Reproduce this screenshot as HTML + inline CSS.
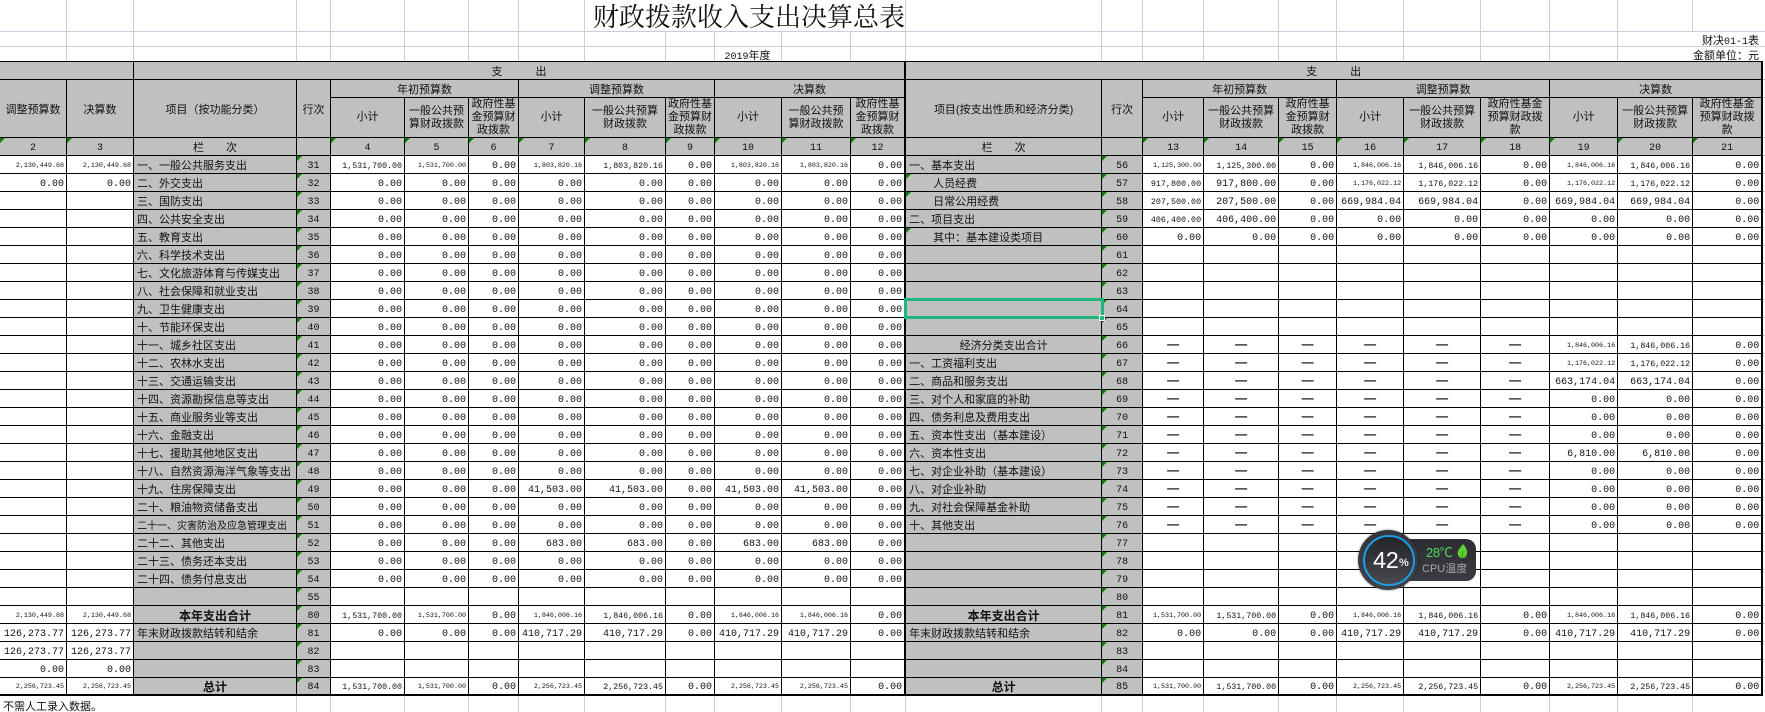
<!DOCTYPE html>
<html lang="zh"><head><meta charset="utf-8"><title>财政拨款收入支出决算总表</title>
<style>
html,body{margin:0;padding:0;background:#fff;width:1765px;height:712px;overflow:hidden}
body{position:relative;font-family:"Liberation Sans","Noto Sans CJK SC",sans-serif;color:#111}
svg.g{position:absolute;left:0;top:0}
table{position:absolute;left:0;top:61px;width:1762px;table-layout:fixed;border-collapse:separate;border-spacing:0;border-top:1px solid #000}
tr{height:18px}
tr.t3{height:40px}
td{box-sizing:border-box;height:18px;padding:3px 2px 0 0;border-right:1px solid #000;border-bottom:1px solid #000;white-space:nowrap;overflow:hidden;text-align:right;vertical-align:middle;font:10px/13px "Liberation Mono","Noto Sans CJK SC",monospace;background:#fff}
td.s{font-size:6.7px}
td.n{font-size:8.4px}
td.w{font-size:8.3px}
td.d{text-align:center;padding:0 0 2px;font:bold 12px/12px "Liberation Sans",sans-serif}
td.x,td.l,td.c,td.b,td.h,td.y{background-color:#c0c0c0}
td.x{text-align:center;padding:3px 0 0;font:11px/13px "Liberation Sans","Noto Sans CJK SC",sans-serif;white-space:nowrap}
tr.t3 td.x{padding:0}
td.l{text-align:left;padding:3px 0 0 3px;font:11px/13px "Liberation Sans","Noto Sans CJK SC",sans-serif}
td.i{padding-left:27px}
td.c{text-align:center;padding:3px 0 0;font:11px/13px "Liberation Sans","Noto Sans CJK SC",sans-serif}
td.b{text-align:center;padding:3px 0 0;font:bold 12px/13px "Liberation Sans","Noto Sans CJK SC",sans-serif}
td.h,td.y{text-align:center;padding:3px 0 0}
td.h,td.t{background-image:linear-gradient(135deg,#0a8000 3.5px,transparent 3.6px);background-size:6px 6px;background-repeat:no-repeat;background-position:0 0}
td.m{border-right-width:2px}
td.e{border-right-width:2px}
tbody tr:last-child td{border-bottom-width:2px}
.a{position:absolute;white-space:nowrap;font-size:11px;line-height:14px}
.mono{font-family:"Liberation Mono","Noto Sans CJK SC",monospace;font-size:10px}
</style></head><body>
<svg class="g" width="1765" height="712" shape-rendering="crispEdges" stroke="#c6cfe0" stroke-width="1">
<path d="M0 31.5H1765M0 46.5H1765"/>
<path d="M66.5 0V61M133.5 0V61M296.5 0V61M330.5 0V61M404.5 0V61M468.5 0V61M518.5 0V61M584.5 0V61M905.5 0V61M1101.5 0V61M1142.5 0V61M1203.5 0V61M1278.5 0V61M1336.5 0V61M1403.5 0V61M1480.5 0V61M1549.5 0V61M1617.5 0V61M1692.5 0V31"/>
<path d="M665.5 31V61M714.5 31V61M781.5 31V61M850.5 31V61"/>
<path d="M296.5 696V712M330.5 696V712M404.5 696V712M468.5 696V712M518.5 696V712M584.5 696V712M665.5 696V712M714.5 696V712M781.5 696V712M850.5 696V712M905.5 696V712M1101.5 696V712M1142.5 696V712M1203.5 696V712M1278.5 696V712M1336.5 696V712M1403.5 696V712M1480.5 696V712M1549.5 696V712M1617.5 696V712M1692.5 696V712"/>
<path d="M1762 79.5H1765M1762 97.5H1765M1762 137.5H1765M1762 155.5H1765M1762 173.5H1765M1762 191.5H1765M1762 209.5H1765M1762 227.5H1765M1762 245.5H1765M1762 263.5H1765M1762 281.5H1765M1762 299.5H1765M1762 317.5H1765M1762 335.5H1765M1762 353.5H1765M1762 371.5H1765M1762 389.5H1765M1762 407.5H1765M1762 425.5H1765M1762 443.5H1765M1762 461.5H1765M1762 479.5H1765M1762 497.5H1765M1762 515.5H1765M1762 533.5H1765M1762 551.5H1765M1762 569.5H1765M1762 587.5H1765M1762 605.5H1765M1762 623.5H1765M1762 641.5H1765M1762 659.5H1765M1762 677.5H1765"/>
</svg>
<div class="a" style="left:593px;top:1px;font:26px/30px 'Noto Serif CJK SC','Liberation Serif',serif;color:#111">财政拨款收入支出决算总表</div>
<div class="a" style="left:714px;width:67px;top:49px;text-align:center"><span class="mono">2019</span>年度</div>
<div class="a" style="right:6px;top:34px">财决<span class="mono">01-1</span>表</div>
<div class="a" style="right:6px;top:49px">金额单位：元</div>
<div class="a" style="left:3px;top:700px">不需人工录入数据。</div>
<table>
<colgroup>
<col style="width:67px"><col style="width:67px"><col style="width:163px"><col style="width:34px"><col style="width:74px"><col style="width:64px"><col style="width:50px"><col style="width:66px"><col style="width:81px"><col style="width:49px"><col style="width:67px"><col style="width:69px"><col style="width:55px">
<col style="width:196px"><col style="width:41px"><col style="width:61px"><col style="width:75px"><col style="width:58px"><col style="width:67px"><col style="width:77px"><col style="width:69px"><col style="width:68px"><col style="width:75px"><col style="width:70px">
</colgroup>
<thead>
<tr><td class="x" colspan="2"></td><td class="x m" colspan="11">支　　　出</td><td class="x e" colspan="11">支　　　出</td></tr>
<tr><td class="x" rowspan="2">调整预算数</td><td class="x" rowspan="2">决算数</td><td class="x" rowspan="2">项目（按功能分类）</td><td class="x" rowspan="2">行次</td><td class="x" colspan="3">年初预算数</td><td class="x" colspan="3">调整预算数</td><td class="x m" colspan="3">决算数</td><td class="x" rowspan="2">项目(按支出性质和经济分类)</td><td class="x" rowspan="2">行次</td><td class="x" colspan="3">年初预算数</td><td class="x" colspan="3">调整预算数</td><td class="x e" colspan="3">决算数</td></tr>
<tr class="t3"><td class="x">小计</td><td class="x">一般公共预<br>算财政拨款</td><td class="x">政府性基<br>金预算财<br>政拨款</td><td class="x">小计</td><td class="x">一般公共预算<br>财政拨款</td><td class="x">政府性基<br>金预算财<br>政拨款</td><td class="x">小计</td><td class="x">一般公共预<br>算财政拨款</td><td class="x m">政府性基<br>金预算财<br>政拨款</td><td class="x">小计</td><td class="x">一般公共预算<br>财政拨款</td><td class="x">政府性基<br>金预算财<br>政拨款</td><td class="x">小计</td><td class="x">一般公共预算<br>财政拨款</td><td class="x">政府性基金<br>预算财政拨<br>款</td><td class="x">小计</td><td class="x">一般公共预算<br>财政拨款</td><td class="x e">政府性基金<br>预算财政拨<br>款</td></tr>
<tr><td class="y t">2</td><td class="y t">3</td><td class="x">栏　　次</td><td class="y"></td><td class="y t">4</td><td class="y t">5</td><td class="y t">6</td><td class="y t">7</td><td class="y t">8</td><td class="y t">9</td><td class="y t">10</td><td class="y t">11</td><td class="y t m">12</td><td class="x">栏　　次</td><td class="y"></td><td class="y t">13</td><td class="y t">14</td><td class="y t">15</td><td class="y t">16</td><td class="y t">17</td><td class="y t">18</td><td class="y t">19</td><td class="y t">20</td><td class="y t e">21</td></tr>
</thead>
<tbody>
<tr><td class="s">2,130,449.68</td><td class="s">2,130,449.68</td><td class="l">一、一般公共服务支出</td><td class="h">31</td><td class="w">1,531,700.00</td><td class="s">1,531,700.00</td><td>0.00</td><td class="s">1,803,820.16</td><td class="w">1,803,820.16</td><td>0.00</td><td class="s">1,803,820.16</td><td class="s">1,803,820.16</td><td class="m">0.00</td><td class="l">一、基本支出</td><td class="h">56</td><td class="s">1,125,300.00</td><td class="w">1,125,300.00</td><td>0.00</td><td class="s">1,846,006.16</td><td class="w">1,846,006.16</td><td>0.00</td><td class="s">1,846,006.16</td><td class="w">1,846,006.16</td><td class="e">0.00</td></tr>
<tr><td>0.00</td><td>0.00</td><td class="l">二、外交支出</td><td class="h">32</td><td>0.00</td><td>0.00</td><td>0.00</td><td>0.00</td><td>0.00</td><td>0.00</td><td>0.00</td><td>0.00</td><td class="m">0.00</td><td class="l i t">人员经费</td><td class="h">57</td><td class="n">917,800.00</td><td>917,800.00</td><td>0.00</td><td class="s">1,176,022.12</td><td class="w">1,176,022.12</td><td>0.00</td><td class="s">1,176,022.12</td><td class="w">1,176,022.12</td><td class="e">0.00</td></tr>
<tr><td></td><td></td><td class="l">三、国防支出</td><td class="h">33</td><td>0.00</td><td>0.00</td><td>0.00</td><td>0.00</td><td>0.00</td><td>0.00</td><td>0.00</td><td>0.00</td><td class="m">0.00</td><td class="l i t">日常公用经费</td><td class="h">58</td><td class="n">207,500.00</td><td>207,500.00</td><td>0.00</td><td>669,984.04</td><td>669,984.04</td><td>0.00</td><td>669,984.04</td><td>669,984.04</td><td class="e">0.00</td></tr>
<tr><td></td><td></td><td class="l">四、公共安全支出</td><td class="h">34</td><td>0.00</td><td>0.00</td><td>0.00</td><td>0.00</td><td>0.00</td><td>0.00</td><td>0.00</td><td>0.00</td><td class="m">0.00</td><td class="l">二、项目支出</td><td class="h">59</td><td class="n">406,400.00</td><td>406,400.00</td><td>0.00</td><td>0.00</td><td>0.00</td><td>0.00</td><td>0.00</td><td>0.00</td><td class="e">0.00</td></tr>
<tr><td></td><td></td><td class="l">五、教育支出</td><td class="h">35</td><td>0.00</td><td>0.00</td><td>0.00</td><td>0.00</td><td>0.00</td><td>0.00</td><td>0.00</td><td>0.00</td><td class="m">0.00</td><td class="l i t">其中：基本建设类项目</td><td class="h">60</td><td>0.00</td><td>0.00</td><td>0.00</td><td>0.00</td><td>0.00</td><td>0.00</td><td>0.00</td><td>0.00</td><td class="e">0.00</td></tr>
<tr><td></td><td></td><td class="l">六、科学技术支出</td><td class="h">36</td><td>0.00</td><td>0.00</td><td>0.00</td><td>0.00</td><td>0.00</td><td>0.00</td><td>0.00</td><td>0.00</td><td class="m">0.00</td><td class="l"></td><td class="h">61</td><td></td><td></td><td></td><td></td><td></td><td></td><td></td><td></td><td class="e"></td></tr>
<tr><td></td><td></td><td class="l">七、文化旅游体育与传媒支出</td><td class="h">37</td><td>0.00</td><td>0.00</td><td>0.00</td><td>0.00</td><td>0.00</td><td>0.00</td><td>0.00</td><td>0.00</td><td class="m">0.00</td><td class="l"></td><td class="h">62</td><td></td><td></td><td></td><td></td><td></td><td></td><td></td><td></td><td class="e"></td></tr>
<tr><td></td><td></td><td class="l">八、社会保障和就业支出</td><td class="h">38</td><td>0.00</td><td>0.00</td><td>0.00</td><td>0.00</td><td>0.00</td><td>0.00</td><td>0.00</td><td>0.00</td><td class="m">0.00</td><td class="l"></td><td class="h">63</td><td></td><td></td><td></td><td></td><td></td><td></td><td></td><td></td><td class="e"></td></tr>
<tr><td></td><td></td><td class="l">九、卫生健康支出</td><td class="h">39</td><td>0.00</td><td>0.00</td><td>0.00</td><td>0.00</td><td>0.00</td><td>0.00</td><td>0.00</td><td>0.00</td><td class="m">0.00</td><td class="l"></td><td class="h">64</td><td></td><td></td><td></td><td></td><td></td><td></td><td></td><td></td><td class="e"></td></tr>
<tr><td></td><td></td><td class="l">十、节能环保支出</td><td class="h">40</td><td>0.00</td><td>0.00</td><td>0.00</td><td>0.00</td><td>0.00</td><td>0.00</td><td>0.00</td><td>0.00</td><td class="m">0.00</td><td class="l"></td><td class="h">65</td><td></td><td></td><td></td><td></td><td></td><td></td><td></td><td></td><td class="e"></td></tr>
<tr><td></td><td></td><td class="l">十一、城乡社区支出</td><td class="h">41</td><td>0.00</td><td>0.00</td><td>0.00</td><td>0.00</td><td>0.00</td><td>0.00</td><td>0.00</td><td>0.00</td><td class="m">0.00</td><td class="c">经济分类支出合计</td><td class="h">66</td><td class="d">—</td><td class="d">—</td><td class="d">—</td><td class="d">—</td><td class="d">—</td><td class="d">—</td><td class="s">1,846,006.16</td><td class="w">1,846,006.16</td><td class="e">0.00</td></tr>
<tr><td></td><td></td><td class="l">十二、农林水支出</td><td class="h">42</td><td>0.00</td><td>0.00</td><td>0.00</td><td>0.00</td><td>0.00</td><td>0.00</td><td>0.00</td><td>0.00</td><td class="m">0.00</td><td class="l">一、工资福利支出</td><td class="h">67</td><td class="d">—</td><td class="d">—</td><td class="d">—</td><td class="d">—</td><td class="d">—</td><td class="d">—</td><td class="s">1,176,022.12</td><td class="w">1,176,022.12</td><td class="e">0.00</td></tr>
<tr><td></td><td></td><td class="l">十三、交通运输支出</td><td class="h">43</td><td>0.00</td><td>0.00</td><td>0.00</td><td>0.00</td><td>0.00</td><td>0.00</td><td>0.00</td><td>0.00</td><td class="m">0.00</td><td class="l">二、商品和服务支出</td><td class="h">68</td><td class="d">—</td><td class="d">—</td><td class="d">—</td><td class="d">—</td><td class="d">—</td><td class="d">—</td><td>663,174.04</td><td>663,174.04</td><td class="e">0.00</td></tr>
<tr><td></td><td></td><td class="l">十四、资源勘探信息等支出</td><td class="h">44</td><td>0.00</td><td>0.00</td><td>0.00</td><td>0.00</td><td>0.00</td><td>0.00</td><td>0.00</td><td>0.00</td><td class="m">0.00</td><td class="l">三、对个人和家庭的补助</td><td class="h">69</td><td class="d">—</td><td class="d">—</td><td class="d">—</td><td class="d">—</td><td class="d">—</td><td class="d">—</td><td>0.00</td><td>0.00</td><td class="e">0.00</td></tr>
<tr><td></td><td></td><td class="l">十五、商业服务业等支出</td><td class="h">45</td><td>0.00</td><td>0.00</td><td>0.00</td><td>0.00</td><td>0.00</td><td>0.00</td><td>0.00</td><td>0.00</td><td class="m">0.00</td><td class="l">四、债务利息及费用支出</td><td class="h">70</td><td class="d">—</td><td class="d">—</td><td class="d">—</td><td class="d">—</td><td class="d">—</td><td class="d">—</td><td>0.00</td><td>0.00</td><td class="e">0.00</td></tr>
<tr><td></td><td></td><td class="l">十六、金融支出</td><td class="h">46</td><td>0.00</td><td>0.00</td><td>0.00</td><td>0.00</td><td>0.00</td><td>0.00</td><td>0.00</td><td>0.00</td><td class="m">0.00</td><td class="l">五、资本性支出（基本建设）</td><td class="h">71</td><td class="d">—</td><td class="d">—</td><td class="d">—</td><td class="d">—</td><td class="d">—</td><td class="d">—</td><td>0.00</td><td>0.00</td><td class="e">0.00</td></tr>
<tr><td></td><td></td><td class="l">十七、援助其他地区支出</td><td class="h">47</td><td>0.00</td><td>0.00</td><td>0.00</td><td>0.00</td><td>0.00</td><td>0.00</td><td>0.00</td><td>0.00</td><td class="m">0.00</td><td class="l">六、资本性支出</td><td class="h">72</td><td class="d">—</td><td class="d">—</td><td class="d">—</td><td class="d">—</td><td class="d">—</td><td class="d">—</td><td>6,810.00</td><td>6,810.00</td><td class="e">0.00</td></tr>
<tr><td></td><td></td><td class="l">十八、自然资源海洋气象等支出</td><td class="h">48</td><td>0.00</td><td>0.00</td><td>0.00</td><td>0.00</td><td>0.00</td><td>0.00</td><td>0.00</td><td>0.00</td><td class="m">0.00</td><td class="l">七、对企业补助（基本建设）</td><td class="h">73</td><td class="d">—</td><td class="d">—</td><td class="d">—</td><td class="d">—</td><td class="d">—</td><td class="d">—</td><td>0.00</td><td>0.00</td><td class="e">0.00</td></tr>
<tr><td></td><td></td><td class="l">十九、住房保障支出</td><td class="h">49</td><td>0.00</td><td>0.00</td><td>0.00</td><td>41,503.00</td><td>41,503.00</td><td>0.00</td><td>41,503.00</td><td>41,503.00</td><td class="m">0.00</td><td class="l">八、对企业补助</td><td class="h">74</td><td class="d">—</td><td class="d">—</td><td class="d">—</td><td class="d">—</td><td class="d">—</td><td class="d">—</td><td>0.00</td><td>0.00</td><td class="e">0.00</td></tr>
<tr><td></td><td></td><td class="l">二十、粮油物资储备支出</td><td class="h">50</td><td>0.00</td><td>0.00</td><td>0.00</td><td>0.00</td><td>0.00</td><td>0.00</td><td>0.00</td><td>0.00</td><td class="m">0.00</td><td class="l">九、对社会保障基金补助</td><td class="h">75</td><td class="d">—</td><td class="d">—</td><td class="d">—</td><td class="d">—</td><td class="d">—</td><td class="d">—</td><td>0.00</td><td>0.00</td><td class="e">0.00</td></tr>
<tr><td></td><td></td><td class="l" style="font-size:10px">二十一、灾害防治及应急管理支出</td><td class="h">51</td><td>0.00</td><td>0.00</td><td>0.00</td><td>0.00</td><td>0.00</td><td>0.00</td><td>0.00</td><td>0.00</td><td class="m">0.00</td><td class="l">十、其他支出</td><td class="h">76</td><td class="d">—</td><td class="d">—</td><td class="d">—</td><td class="d">—</td><td class="d">—</td><td class="d">—</td><td>0.00</td><td>0.00</td><td class="e">0.00</td></tr>
<tr><td></td><td></td><td class="l">二十二、其他支出</td><td class="h">52</td><td>0.00</td><td>0.00</td><td>0.00</td><td>683.00</td><td>683.00</td><td>0.00</td><td>683.00</td><td>683.00</td><td class="m">0.00</td><td class="l"></td><td class="h">77</td><td></td><td></td><td></td><td></td><td></td><td></td><td></td><td></td><td class="e"></td></tr>
<tr><td></td><td></td><td class="l">二十三、债务还本支出</td><td class="h">53</td><td>0.00</td><td>0.00</td><td>0.00</td><td>0.00</td><td>0.00</td><td>0.00</td><td>0.00</td><td>0.00</td><td class="m">0.00</td><td class="l"></td><td class="h">78</td><td></td><td></td><td></td><td></td><td></td><td></td><td></td><td></td><td class="e"></td></tr>
<tr><td></td><td></td><td class="l">二十四、债务付息支出</td><td class="h">54</td><td>0.00</td><td>0.00</td><td>0.00</td><td>0.00</td><td>0.00</td><td>0.00</td><td>0.00</td><td>0.00</td><td class="m">0.00</td><td class="l"></td><td class="h">79</td><td></td><td></td><td></td><td></td><td></td><td></td><td></td><td></td><td class="e"></td></tr>
<tr><td></td><td></td><td class="l"></td><td class="h">55</td><td></td><td></td><td></td><td></td><td></td><td></td><td></td><td></td><td class="m"></td><td class="l"></td><td class="h">80</td><td></td><td></td><td></td><td></td><td></td><td></td><td></td><td></td><td class="e"></td></tr>
<tr><td class="s">2,130,449.68</td><td class="s">2,130,449.68</td><td class="b">本年支出合计</td><td class="h">80</td><td class="w">1,531,700.00</td><td class="s">1,531,700.00</td><td>0.00</td><td class="s">1,846,006.16</td><td class="w">1,846,006.16</td><td>0.00</td><td class="s">1,846,006.16</td><td class="s">1,846,006.16</td><td class="m">0.00</td><td class="b">本年支出合计</td><td class="h">81</td><td class="s">1,531,700.00</td><td class="w">1,531,700.00</td><td>0.00</td><td class="s">1,846,006.16</td><td class="w">1,846,006.16</td><td>0.00</td><td class="s">1,846,006.16</td><td class="w">1,846,006.16</td><td class="e">0.00</td></tr>
<tr><td>126,273.77</td><td>126,273.77</td><td class="l">年末财政拨款结转和结余</td><td class="h">81</td><td>0.00</td><td>0.00</td><td>0.00</td><td>410,717.29</td><td>410,717.29</td><td>0.00</td><td>410,717.29</td><td>410,717.29</td><td class="m">0.00</td><td class="l">年末财政拨款结转和结余</td><td class="h">82</td><td>0.00</td><td>0.00</td><td>0.00</td><td>410,717.29</td><td>410,717.29</td><td>0.00</td><td>410,717.29</td><td>410,717.29</td><td class="e">0.00</td></tr>
<tr><td>126,273.77</td><td>126,273.77</td><td class="l"></td><td class="h">82</td><td></td><td></td><td></td><td></td><td></td><td></td><td></td><td></td><td class="m"></td><td class="l"></td><td class="h">83</td><td></td><td></td><td></td><td></td><td></td><td></td><td></td><td></td><td class="e"></td></tr>
<tr><td>0.00</td><td>0.00</td><td class="l"></td><td class="h">83</td><td></td><td></td><td></td><td></td><td></td><td></td><td></td><td></td><td class="m"></td><td class="l"></td><td class="h">84</td><td></td><td></td><td></td><td></td><td></td><td></td><td></td><td></td><td class="e"></td></tr>
<tr><td class="s">2,256,723.45</td><td class="s">2,256,723.45</td><td class="b">总计</td><td class="h">84</td><td class="w">1,531,700.00</td><td class="s">1,531,700.00</td><td>0.00</td><td class="s">2,256,723.45</td><td class="w">2,256,723.45</td><td>0.00</td><td class="s">2,256,723.45</td><td class="s">2,256,723.45</td><td class="m">0.00</td><td class="b">总计</td><td class="h">85</td><td class="s">1,531,700.00</td><td class="w">1,531,700.00</td><td>0.00</td><td class="s">2,256,723.45</td><td class="w">2,256,723.45</td><td>0.00</td><td class="s">2,256,723.45</td><td class="w">2,256,723.45</td><td class="e">0.00</td></tr>
</tbody>
</table>
<div style="position:absolute;left:904px;top:298px;width:194px;height:15px;border:3px solid #1fb87c"></div>
<div style="position:absolute;left:1099px;top:315px;width:4px;height:4px;background:#1fb87c;border:1px solid #fff"></div>

<div style="position:absolute;left:1398px;top:539px;width:78px;height:42px;border-radius:0 10px 10px 0;background:linear-gradient(#2b2d33,#3a3c42)"></div>
<div style="position:absolute;left:1358px;top:530px;width:60px;height:60px;border-radius:50%;background:linear-gradient(#33363d,#3f4147);box-shadow:0 0 2px rgba(0,0,0,.5)"></div>
<div style="position:absolute;left:1363px;top:534.5px;width:47.5px;height:47.5px;border-radius:50%;border:2.5px solid #1b9fe6;background:linear-gradient(#23252b,#48494e)"></div>
<div class="a" style="left:1373px;top:546px;font:23.5px/28px 'Liberation Sans',sans-serif;color:#fff;letter-spacing:-.3px">42</div>
<div class="a" style="left:1399px;top:556px;font:bold 11px/14px 'Liberation Sans',sans-serif;color:#e8e8e8">%</div>
<div class="a" style="left:1426px;top:545px;font:13px/16px 'Liberation Sans','Noto Sans CJK SC',sans-serif;color:#4fdc5a;letter-spacing:-.4px">28℃</div>
<svg style="position:absolute;left:1457px;top:544px" width="11" height="15" viewBox="0 0 11 15"><path d="M6 0C10 4 11 8 9.5 11.5C8.5 13.5 6.5 14.5 5 14C3 14 1 12.5 .7 9.5C.5 6 3.5 3.5 6 0Z" fill="#5fd02f"/><path d="M5.5 14V7" stroke="#2f8a18" stroke-width=".8" fill="none"/></svg>
<div class="a" style="left:1422px;top:561px;font:11px/16px 'Liberation Sans','Noto Sans CJK SC',sans-serif;color:#a4a8ac">CPU温度</div>
</body></html>
